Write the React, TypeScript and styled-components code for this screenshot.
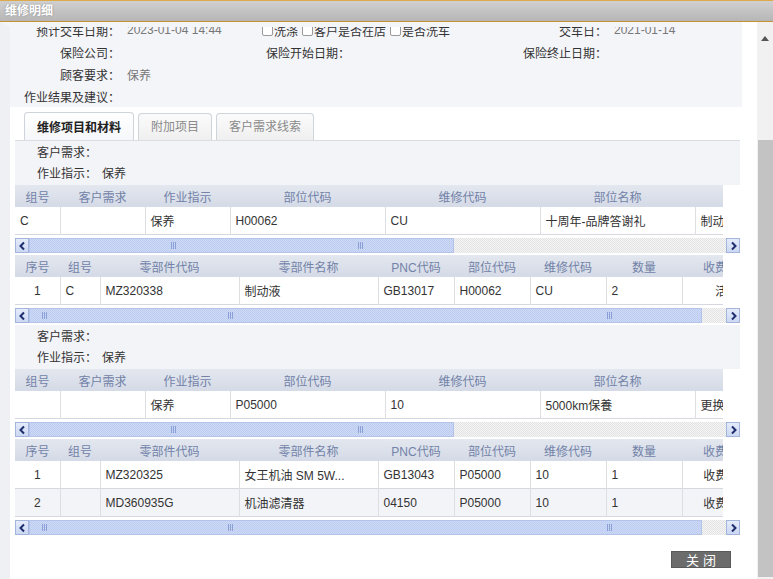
import React from 'react'
import styled, { createGlobalStyle } from 'styled-components'

const GlobalStyle = createGlobalStyle`
  html, body {
    margin: 0;
    padding: 0;
    background: #fff;
  }
  body {
    font-family: "Liberation Sans", "Noto Sans CJK SC", sans-serif;
    font-size: 12px;
    color: #333;
  }
`

type Col = { title: string; width: number; center?: boolean }

const repairCols: Col[] = [
  { title: '组号', width: 45 },
  { title: '客户需求', width: 85 },
  { title: '作业指示', width: 85 },
  { title: '部位代码', width: 155 },
  { title: '维修代码', width: 155 },
  { title: '部位名称', width: 155 },
  { title: '维修名称', width: 155 },
]

const partCols: Col[] = [
  { title: '序号', width: 45, center: true },
  { title: '组号', width: 40 },
  { title: '零部件代码', width: 139 },
  { title: '零部件名称', width: 139 },
  { title: 'PNC代码', width: 76 },
  { title: '部位代码', width: 76 },
  { title: '维修代码', width: 76 },
  { title: '数量', width: 76 },
  { title: '收费类型', width: 90, center: true },
]

const groups = [
  {
    need: '',
    order: '保养',
    repairs: [['C', '', '保养', 'H00062', 'CU', '十周年-品牌答谢礼', '制动液更换']],
    parts: [['1', 'C', 'MZ320338', '制动液', 'GB13017', 'H00062', 'CU', '2', '活动']],
  },
  {
    need: '',
    order: '保养',
    repairs: [['', '', '保养', 'P05000', '10', '5000km保養', '更换机油机滤']],
    parts: [
      ['1', '', 'MZ320325', '女王机油 SM 5W...', 'GB13043', 'P05000', '10', '1', '收费维修'],
      ['2', '', 'MD360935G', '机油滤清器', '04150', 'P05000', '10', '1', '收费维修'],
    ],
  },
]

const Window = styled.div`
  width: 773px;
  height: 579px;
  overflow: hidden;
  display: flex;
  flex-direction: column;
  background: #fff;
`

const TitleBar = styled.div`
  flex: none;
  height: 20px;
  line-height: 20px;
  padding-left: 5px;
  border-top: 1px solid #dcaa4c;
  border-bottom: 1px solid #c8912f;
  background: linear-gradient(#d0d0d0, #b6b6b6);
  color: #fff;
  font-weight: bold;
  text-shadow: 0 0 2px #8a8a8a;
`

const Body = styled.div`
  flex: 1;
  min-height: 0;
  display: flex;
  background: #fff;
`

const Main = styled.div`
  flex: 1;
  min-width: 0;
  overflow: hidden;
  background: #fff;
  border-left: 10px solid #eff0f3;
  border-top: 5px solid #f4f5f9;
`

const Sheet = styled.div`
  margin-top: -8px;
`

const InfoPanel = styled.div`
  background: #f4f5f9;
  display: grid;
  grid-template-columns: 110px 130px 100px 157px 100px 1fr;
  grid-auto-rows: 22px;
  align-items: center;
`

const Label = styled.div`
  text-align: right;
  white-space: nowrap;
  color: #333;
`

const Value = styled.div`
  padding-left: 7px;
  white-space: nowrap;
  color: #777;
`

const Checks = styled.div`
  grid-column: span 2;
  padding-left: 12px;
  display: flex;
  gap: 4px;
  white-space: nowrap;
`

const Check = styled.span`
  display: inline-flex;
  align-items: center;
  gap: 1px;
  &::before {
    content: '';
    width: 11px;
    height: 11px;
    border: 1px solid #9a9a9a;
    border-radius: 2px;
    background: #fff;
    box-sizing: border-box;
  }
`

const TabBar = styled.div`
  margin: 5px 2px 0 5px;
  padding-left: 9px;
  height: 28px;
  display: flex;
  align-items: flex-end;
  gap: 4px;
  border-bottom: 1px solid #dadde3;
`

const Tab = styled.div<{ $active?: boolean }>`
  height: ${(p) => (p.$active ? 27 : 26)}px;
  line-height: ${(p) => (p.$active ? 30 : 26)}px;
  padding: 0 12px;
  border: 1px solid #cfd3da;
  border-bottom: none;
  border-radius: 4px 4px 0 0;
  white-space: nowrap;
  font-weight: ${(p) => (p.$active ? 'bold' : 'normal')};
  color: ${(p) => (p.$active ? '#222' : '#8a8a8a')};
  background: ${(p) =>
    p.$active ? 'linear-gradient(#ffffff, #f6f7fa)' : 'linear-gradient(#fbfbfb, #efefef)'};
`

const TabPanel = styled.div`
  margin: 0 2px 0 5px;
  background: #fff;
`

const Lines = styled.div`
  background: #f3f4f8;
  padding: 2px 0 0 22px;
`

const Line = styled.div`
  height: 21px;
  line-height: 21px;
  white-space: nowrap;
  span {
    margin-left: 5px;
  }
`

const GridBox = styled.div`
  width: 725px;
`

const Clip = styled.div`
  width: 708px;
  overflow: hidden;
`

const Table = styled.table`
  table-layout: fixed;
  border-collapse: collapse;
  border-spacing: 0;
`

const Th = styled.th`
  height: 22px;
  padding: 0;
  font-weight: normal;
  text-align: center;
  white-space: nowrap;
  overflow: hidden;
  color: #7282a8;
  background: linear-gradient(#e3e7ef, #d4dae6);
`

const Tr = styled.tr<{ $alt?: boolean }>`
  background: ${(p) => (p.$alt ? '#f3f4f8' : '#fff')};
  border-bottom: 1px solid #d5d8de;
`

const Td = styled.td<{ $center?: boolean }>`
  position: relative;
  height: 27px;
  padding: 0 5px;
  white-space: nowrap;
  overflow: hidden;
  text-align: ${(p) => (p.$center ? 'center' : 'left')};
  color: #333;
  & + & {
    border-left: 1px solid #dcdee2;
  }
  & + &::before {
    content: '';
    position: absolute;
    left: -1px;
    top: 0;
    width: 1px;
    height: 2px;
    background: #555;
  }
`

const HBar = styled.div`
  display: flex;
  height: 15px;
  margin: 3px 0 2px;
  background: repeating-conic-gradient(#e3e3e3 0 25%, #f5f5f5 0 50%) 0 0 / 2px 2px;
`

const Arrow = styled.div`
  flex: none;
  width: 12px;
  height: 13px;
  border: 1px solid #a3b5dc;
  background: linear-gradient(#e4ebfa, #ccd8f3);
  display: flex;
  align-items: center;
  justify-content: center;
  svg {
    display: block;
  }
`

const Thumb = styled.div<{ $w: number }>`
  position: relative;
  flex: none;
  width: ${(p) => p.$w}px;
  height: 13px;
  border: 1px solid #b3c3ea;
  box-sizing: content-box;
  background: repeating-conic-gradient(#bccbf0 0 25%, #cfdaf6 0 50%) 0 0 / 2px 2px;
`

const TrackRest = styled.div`
  flex: 1;
`

const Grip = styled.div<{ $at: number }>`
  position: absolute;
  left: ${(p) => p.$at}px;
  top: 3px;
  width: 6px;
  height: 7px;
  background: repeating-linear-gradient(90deg, #8aa0d6 0 1px, transparent 1px 2px);
`

const VBar = styled.div`
  flex: none;
  width: 16px;
  margin-left: 15px;
  display: flex;
  flex-direction: column;
  background: #f1f1f1;
  padding-top: 8px;
`

const VArrow = styled.div`
  height: 16px;
  display: flex;
  justify-content: center;
  align-items: center;
`

const VThumb = styled.div`
  flex: 1;
  margin: 94px 0 2px 1px;
  background: #c3c3c3;
`

const Footer = styled.div`
  display: flex;
  justify-content: flex-end;
  padding: 14px 11px 0 0;
`

const CloseButton = styled.button`
  width: 60px;
  height: 17px;
  padding: 0;
  border: 1px solid #5a5a5a;
  background: #6c6c6c;
  color: #fff;
  font-family: "Noto Sans CJK SC", sans-serif;
  font-size: 13px;
  line-height: 15px;
  letter-spacing: 4px;
  text-indent: 4px;
`

function Chevron({ dir }: { dir: 'left' | 'right' }) {
  const pts = dir === 'left' ? '6,1.5 2.5,5 6,8.5' : '3,1.5 6.5,5 3,8.5'
  return (
    <svg width="9" height="10" viewBox="0 0 9 10">
      <polyline points={pts} fill="none" stroke="#1e2d6e" strokeWidth="2" />
    </svg>
  )
}

function ScrollBar({ thumb, grips }: { thumb: number; grips: number[] }) {
  return (
    <HBar>
      <Arrow>
        <Chevron dir="left" />
      </Arrow>
      <Thumb $w={thumb}>
        {grips.map((g) => (
          <Grip key={g} $at={g} />
        ))}
      </Thumb>
      <TrackRest />
      <Arrow>
        <Chevron dir="right" />
      </Arrow>
    </HBar>
  )
}

function Grid({ cols, rows, thumb, grips }: { cols: Col[]; rows: string[][]; thumb: number; grips: number[] }) {
  const total = cols.reduce((s, c) => s + c.width, 0)
  return (
    <GridBox>
      <Clip>
        <Table style={{ width: total }}>
          <colgroup>
            {cols.map((c) => (
              <col key={c.title} style={{ width: c.width }} />
            ))}
          </colgroup>
          <thead>
            <tr>
              {cols.map((c) => (
                <Th key={c.title}>{c.title}</Th>
              ))}
            </tr>
          </thead>
          <tbody>
            {rows.map((r, i) => (
              <Tr key={i} $alt={i % 2 === 1}>
                {r.map((v, j) => (
                  <Td key={j} $center={cols[j].center}>
                    {v}
                  </Td>
                ))}
              </Tr>
            ))}
          </tbody>
        </Table>
      </Clip>
      <ScrollBar thumb={thumb} grips={grips} />
    </GridBox>
  )
}

export default function App() {
  return (
    <>
      <GlobalStyle />
      <Window>
        <TitleBar>维修明细</TitleBar>
        <Body>
          <Main>
            <Sheet>
              <InfoPanel>
                <Label>预计交车日期：</Label>
                <Value>2023-01-04 14:44</Value>
                <Checks>
                  <Check>洗涤</Check>
                  <Check>客户是否在店</Check>
                  <Check>是否洗车</Check>
                </Checks>
                <Label>交车日：</Label>
                <Value>2021-01-14</Value>

                <Label>保险公司：</Label>
                <Value />
                <Label>保险开始日期：</Label>
                <Value />
                <Label>保险终止日期：</Label>
                <Value />

                <Label>顾客要求：</Label>
                <Value>保养</Value>
                <div style={{ gridColumn: 'span 4' }} />

                <Label>作业结果及建议：</Label>
                <Value />
              </InfoPanel>

              <TabBar>
                <Tab $active>维修项目和材料</Tab>
                <Tab>附加项目</Tab>
                <Tab>客户需求线索</Tab>
              </TabBar>

              <TabPanel>
                {groups.map((g, i) => (
                  <React.Fragment key={i}>
                    <Lines>
                      <Line>客户需求：{g.need}</Line>
                      <Line>
                        作业指示：<span>{g.order}</span>
                      </Line>
                    </Lines>
                    <Grid cols={repairCols} rows={g.repairs} thumb={423} grips={[141, 328]} />
                    <Grid cols={partCols} rows={g.parts} thumb={671} grips={[12, 198, 577]} />
                  </React.Fragment>
                ))}
              </TabPanel>

              <Footer>
                <CloseButton>关闭</CloseButton>
              </Footer>
            </Sheet>
          </Main>
          <VBar>
            <VArrow>
              <svg width="8" height="5" viewBox="0 0 8 5">
                <polygon points="4,0 8,5 0,5" fill="#555" />
              </svg>
            </VArrow>
            <VThumb />
          </VBar>
        </Body>
      </Window>
    </>
  )
}
